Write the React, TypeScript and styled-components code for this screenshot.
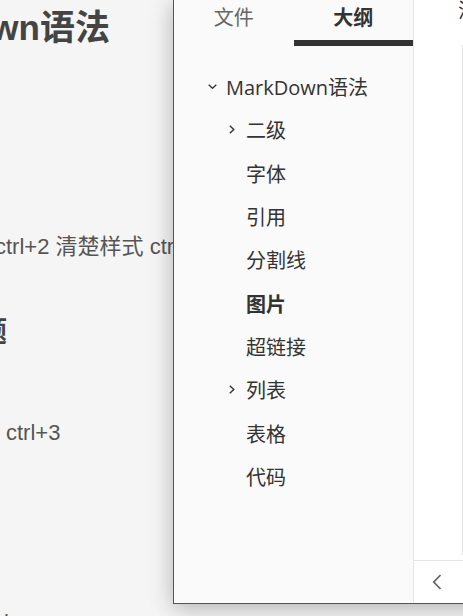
import React from 'react';
import styled, { createGlobalStyle } from 'styled-components';

const GlobalStyle = createGlobalStyle`
  html, body {
    margin: 0;
    padding: 0;
    background: #f5f5f5;
  }
`;

const Screen = styled.div`
  position: relative;
  width: 463px;
  height: 616px;
  overflow: hidden;
  background: #f5f5f5;
  font-family: "Liberation Sans", "Noto Sans CJK SC", sans-serif;
`;

const Doc = styled.div`
  display: flex;
  flex-direction: column;
  white-space: nowrap;
`;

const Heading = styled.div<{ $size: number; $indent: number; $gap: number; $lh: number }>`
  margin-top: ${(p) => p.$gap}px;
  margin-left: ${(p) => p.$indent}px;
  font-size: ${(p) => p.$size}px;
  line-height: ${(p) => p.$lh}px;
  font-weight: 700;
  color: #444;
`;

const Line = styled.div<{ $indent: number; $gap: number }>`
  margin-top: ${(p) => p.$gap}px;
  margin-left: ${(p) => p.$indent}px;
  font-size: 22px;
  line-height: 30px;
  color: #555;
`;

const Panel = styled.div`
  position: absolute;
  left: 173px;
  top: -1px;
  width: 340px;
  height: 605px;
  box-sizing: border-box;
  border: 1px solid #555;
  display: flex;
  box-shadow: 0 4px 22px rgba(0, 0, 0, 0.28);
  font-family: "Open Sans", "Noto Sans CJK SC", sans-serif;
`;

const Sidebar = styled.div`
  width: 240px;
  box-sizing: border-box;
  border-right: 1px solid #e6e6e6;
  background: #fafafa;
  display: flex;
  flex-direction: column;
`;

const Tabs = styled.div`
  display: grid;
  grid-template-columns: 1fr 1fr;
`;

const Tab = styled.div<{ $active?: boolean }>`
  height: 46px;
  box-sizing: border-box;
  padding-bottom: 5px;
  border-bottom: 6px solid ${(p) => (p.$active ? '#333' : 'transparent')};
  text-align: center;
  font-size: 20px;
  line-height: 35px;
  font-weight: ${(p) => (p.$active ? 700 : 400)};
  color: ${(p) => (p.$active ? '#333' : '#666')};
`;

const Tree = styled.div`
  padding-top: 19px;
  display: flex;
  flex-direction: column;
`;

const Row = styled.div<{ $level: number }>`
  height: 43.3px;
  display: flex;
  align-items: center;
  padding-left: ${(p) => (p.$level === 1 ? 30 : 50)}px;
`;

const Arrow = styled.span`
  width: 16px;
  margin-right: 6px;
  display: flex;
  align-items: center;
  justify-content: center;
`;

const Label = styled.span<{ $active?: boolean }>`
  font-size: 20px;
  color: #333;
  font-weight: ${(p) => (p.$active ? 700 : 400)};
  white-space: nowrap;
`;

const RightPane = styled.div`
  flex: 1;
  background: #fff;
  display: flex;
  flex-direction: column;
`;

const TitleRow = styled.div`
  height: 45px;
  padding-left: 44px;
  font-size: 20px;
  line-height: 22px;
  color: #333;
  white-space: nowrap;
`;

const Content = styled.div`
  flex: 1;
  margin-left: 48px;
  margin-bottom: 5px;
  border-left: 1px solid #e3e3e3;
`;

const Footer = styled.div`
  height: 43px;
  box-sizing: border-box;
  border-top: 1px solid #e3e3e3;
  display: flex;
`;

const CollapseButton = styled.div`
  width: 46px;
  display: flex;
  align-items: center;
  justify-content: center;
`;

type Item = { label: string; level: number; arrow?: 'down' | 'right'; active?: boolean };

const items: Item[] = [
  { label: 'MarkDown语法', level: 1, arrow: 'down' },
  { label: '二级', level: 2, arrow: 'right' },
  { label: '字体', level: 2 },
  { label: '引用', level: 2 },
  { label: '分割线', level: 2 },
  { label: '图片', level: 2, active: true },
  { label: '超链接', level: 2 },
  { label: '列表', level: 2, arrow: 'right' },
  { label: '表格', level: 2 },
  { label: '代码', level: 2 },
];

const Chevron = ({ dir }: { dir: 'down' | 'right' }) =>
  dir === 'down' ? (
    <svg width="9" height="5" viewBox="0 0 9 5">
      <path d="M0.7 0.7 L4.5 4.3 L8.3 0.7" fill="none" stroke="#333" strokeWidth="1.3" />
    </svg>
  ) : (
    <svg width="6" height="9" viewBox="0 0 6 9">
      <path d="M0.8 0.7 L4.8 4.5 L0.8 8.3" fill="none" stroke="#333" strokeWidth="1.4" />
    </svg>
  );

export default function App() {
  return (
    <Screen>
      <GlobalStyle />
      <Doc>
        <Heading $size={35} $lh={56} $gap={0} $indent={-137}>MarkDown语法</Heading>
        <Line $gap={176} $indent={-5}>ctrl+2 清楚样式 ctrl+3</Line>
        <Heading $size={28} $lh={40} $gap={51} $indent={-49}>标题</Heading>
        <Line $gap={65} $indent={6}>ctrl+3</Line>
        <Line $gap={160} $indent={4}>l</Line>
      </Doc>
      <Panel>
        <Sidebar>
          <Tabs>
            <Tab>文件</Tab>
            <Tab $active>大纲</Tab>
          </Tabs>
          <Tree>
            {items.map((it) => (
              <Row key={it.label} $level={it.level}>
                <Arrow>{it.arrow && <Chevron dir={it.arrow} />}</Arrow>
                <Label $active={it.active}>{it.label}</Label>
              </Row>
            ))}
          </Tree>
        </Sidebar>
        <RightPane>
          <TitleRow>消息</TitleRow>
          <Content />
          <Footer>
            <CollapseButton>
              <svg width="10" height="16" viewBox="0 0 10 16">
                <path d="M8.5 1 L1.8 8 L8.5 15" fill="none" stroke="#666" strokeWidth="1.8" />
              </svg>
            </CollapseButton>
          </Footer>
        </RightPane>
      </Panel>
    </Screen>
  );
}
